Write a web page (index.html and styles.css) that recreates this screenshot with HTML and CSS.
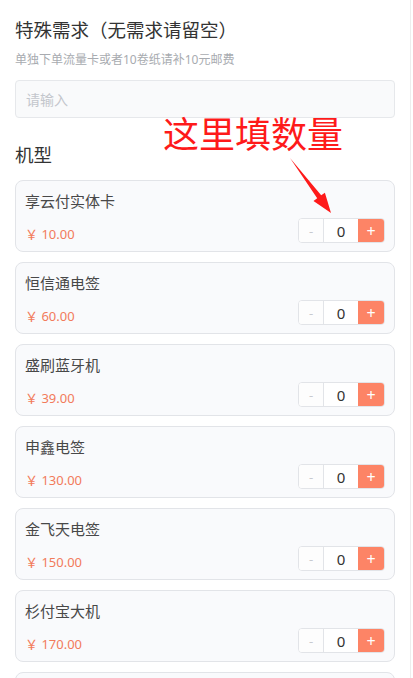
FILE: index.html
```html
<!doctype html>
<html lang="zh">
<head>
  <meta charset="UTF-8">
  <meta name="viewport" content="width=device-width, initial-scale=1.0">
  <title>下单</title>
  <link rel="stylesheet" href="styles.css">
</head>
<body>
<div class="page">
  <h3 class="title">特殊需求（无需求请留空）</h3>
  <p class="tip">单独下单流量卡或者10卷纸请补10元邮费</p>
  <input class="remark" type="text" placeholder="请输入">

  <h3 class="title sub">机型</h3>

  <div class="list">
    <div class="card">
      <div class="info">
        <div class="name">享云付实体卡</div>
        <div class="price">￥ 10.00</div>
      </div>
      <div class="stepper"><span class="minus">-</span><span class="num">0</span><span class="plus">+</span></div>
    </div>
    <div class="card">
      <div class="info">
        <div class="name">恒信通电签</div>
        <div class="price">￥ 60.00</div>
      </div>
      <div class="stepper"><span class="minus">-</span><span class="num">0</span><span class="plus">+</span></div>
    </div>
    <div class="card">
      <div class="info">
        <div class="name">盛刷蓝牙机</div>
        <div class="price">￥ 39.00</div>
      </div>
      <div class="stepper"><span class="minus">-</span><span class="num">0</span><span class="plus">+</span></div>
    </div>
    <div class="card">
      <div class="info">
        <div class="name">申鑫电签</div>
        <div class="price">￥ 130.00</div>
      </div>
      <div class="stepper"><span class="minus">-</span><span class="num">0</span><span class="plus">+</span></div>
    </div>
    <div class="card">
      <div class="info">
        <div class="name">金飞天电签</div>
        <div class="price">￥ 150.00</div>
      </div>
      <div class="stepper"><span class="minus">-</span><span class="num">0</span><span class="plus">+</span></div>
    </div>
    <div class="card">
      <div class="info">
        <div class="name">杉付宝大机</div>
        <div class="price">￥ 170.00</div>
      </div>
      <div class="stepper"><span class="minus">-</span><span class="num">0</span><span class="plus">+</span></div>
    </div>
    <!-- 下一项只露出边框 -->
    <div class="card"></div>
  </div>

  <!-- 标注 -->
  <div class="mark">这里填数量</div>
  <svg class="arrow" width="60" height="70" viewBox="280 150 60 70">
    <polygon points="290,158 321.2,195.3 324.9,192.7 331,213 313.5,200.9 317.2,198.3" fill="#fe1a1a"/>
  </svg>
</div>
</body>
</html>
```

FILE: styles.css
```css
* {
  margin: 0;
  padding: 0;
  box-sizing: border-box;
}

body {
  font-family: "Noto Sans", "Noto Sans CJK SC", sans-serif;
  color: #333;
  background: #fff;
}

.page {
  position: relative;
  width: 411px;
  padding: 18px 15px 0;
  border-right: 1px solid #ededed;
  min-height: 678px;
}

.title {
  font-size: 18.5px;
  font-weight: 400;
  line-height: 24px;
  color: #333;
}

.title.sub {
  margin-top: 25px;
}

.tip {
  margin-top: 9px;
  font-size: 12px;
  line-height: 18px;
  color: #a8abb0;
}

.remark {
  display: block;
  width: 100%;
  height: 38px;
  margin-top: 11px;
  padding: 0 10px;
  border: 1px solid #e6e8eb;
  border-radius: 4px;
  background: #f9fafb;
  font-family: inherit;
  font-size: 14px;
  outline: none;
}

.remark::placeholder {
  color: #c3c6cc;
}

.list {
  margin-top: 13px;
  display: flex;
  flex-direction: column;
  gap: 10px;
}

.card {
  height: 72px;
  flex-shrink: 0;
  display: flex;
  justify-content: space-between;
  padding: 9px 9px 8px 9px;
  border: 1px solid #e2e4e8;
  border-radius: 8px;
  background: #f9fafc;
}

.info .name {
  font-size: 15px;
  line-height: 22px;
  color: #484848;
}

.info .price {
  margin-top: 13px;
  font-size: 13px;
  line-height: 18px;
  color: #f27b5b;
}

.stepper {
  align-self: flex-end;
  display: flex;
  height: 25px;
  border: 1px solid #e2e4e8;
  border-radius: 4px;
  overflow: hidden;
  background: #fff;
}

.stepper span {
  display: flex;
  align-items: center;
  justify-content: center;
}

.stepper .minus {
  width: 25px;
  color: #c8cacf;
  font-size: 13px;
  background: #fdfdfd;
  border-right: 1px solid #e2e4e8;
}

.stepper .num {
  width: 34px;
  font-size: 15px;
  color: #333;
}

.stepper .plus {
  width: 26px;
  color: #fff;
  font-size: 16px;
  background: #fd8466;
}

.mark {
  position: absolute;
  left: 163px;
  top: 116px;
  font-size: 36px;
  line-height: 38px;
  color: #fe1a1a;
  white-space: nowrap;
}

.arrow {
  position: absolute;
  left: 280px;
  top: 150px;
}
```
